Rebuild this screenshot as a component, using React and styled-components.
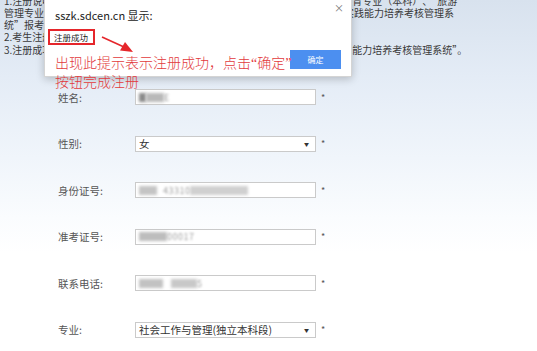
import React from 'react';
import styled, { createGlobalStyle } from 'styled-components';

const GlobalStyle = createGlobalStyle`
  html, body {
    margin: 0;
    padding: 0;
    width: 537px;
    height: 351px;
    overflow: hidden;
  }
  body {
    font-family: "Noto Sans CJK SC", "Liberation Sans", sans-serif;
    color: #333;
  }
`;

const Page = styled.div`
  position: relative;
  width: 537px;
  height: 351px;
  overflow: hidden;
  background: linear-gradient(180deg, #d8e2ee 0%, #e4ecf6 22%, #f0f5fb 45%, #fafcfe 62%, #ffffff 72%);
`;

const Notice = styled.div`
  margin-top: -5px;
  padding-left: 4px;
  font-size: 10px;
  line-height: 12px;
  color: #3a3a3a;
`;

const Para = styled.div`
  white-space: nowrap;
  margin-top: ${p => p.$gap || 0}px;
`;

const Form = styled.div`
  margin-top: 33px;
`;

const Row = styled.div`
  display: grid;
  grid-template-columns: 77px 181px auto;
  align-items: center;
  height: 16px;
  padding-left: 58px;
  margin-bottom: 30.5px;
`;

const Label = styled.span`
  font-size: 10.5px;
  color: #555;
`;

const Field = styled.div`
  box-sizing: border-box;
  height: 16px;
  border: 1px solid #cacaca;
  background: #fff;
  display: flex;
  align-items: center;
  padding: 0 6px 0 3px;
  font-size: 10.5px;
  color: #333;
`;

const Caret = styled.span`
  margin-left: auto;
  font-size: 5px;
  color: #333;
`;

const Star = styled.span`
  margin-left: 5px;
  font-size: 9px;
  color: #555;
`;

const Smudge = styled.span`
  display: inline-block;
  width: ${p => p.$w}px;
  height: 9px;
  background: ${p => p.$c || '#c4c4c4'};
  filter: blur(1.6px);
  margin-right: ${p => p.$mr || 0}px;
`;

const Faint = styled.span`
  font-size: 9px;
  color: #a0a0a0;
  filter: blur(1.1px);
  letter-spacing: 0.5px;
`;

const Alert = styled.div`
  position: absolute;
  left: 44px;
  top: -12px;
  width: 308px;
  height: 89px;
  box-sizing: border-box;
  background: #fff;
  border: 1px solid #d4d4d4;
  box-shadow: 0 2px 8px rgba(0, 0, 0, 0.22);
  padding: 19px 10px 0 10px;
`;

const Title = styled.div`
  font-size: 11px;
  line-height: 14px;
  color: #222;
`;

const Close = styled.span`
  position: absolute;
  right: 7px;
  top: 11px;
  font-size: 10px;
  color: #777;
`;

const Message = styled.div`
  display: inline-block;
  margin: 6px 0 0 -7px;
  border: 2.5px solid #e5262b;
  padding: 0 5px 0 4px;
  font-size: 8.5px;
  line-height: 12px;
  color: #222;
`;

const Footer = styled.div`
  display: flex;
  justify-content: flex-end;
  margin-top: 4px;
`;

const OkButton = styled.button`
  width: 51px;
  height: 19px;
  border: none;
  background: #4c8ff0;
  color: #fff;
  font-family: "Noto Sans CJK SC", sans-serif;
  font-size: 8px;
  padding: 0;
`;

const Hint = styled.div`
  position: absolute;
  left: 55px;
  top: 54px;
  font-family: "Liberation Serif", "Noto Sans CJK SC", serif;
  font-weight: 300;
  font-size: 14px;
  line-height: 19px;
  color: #e23a3c;
  white-space: nowrap;
`;

const Arrow = styled.svg`
  position: absolute;
  left: 100px;
  top: 34px;
`;

const fields = [
  { label: '姓名:', content: <><Smudge $w={7} $c="#8a8a8a" /><Smudge $w={18} $c="#b9b9b9" /><Faint>E</Faint></> },
  { label: '性别:', select: '女' },
  { label: '身份证号:', content: <><Smudge $w={18} $mr={6} /><Faint>43310</Faint><Smudge $w={58} $c="#d0d0d0" /></> },
  { label: '准考证号:', content: <><Smudge $w={28} $c="#bdbdbd" /><Faint>00017</Faint></> },
  { label: '联系电话:', content: <><Smudge $w={24} $c="#c2c2c2" $mr={8} /><Smudge $w={26} $c="#c8c8c8" /><Faint>5</Faint></> },
  { label: '专业:', select: '社会工作与管理(独立本科段)' },
];

export default function App() {
  return (
    <Page lang="zh-CN">
      <GlobalStyle />
      <Notice>
        <Para>1.注册说明：本系统适用于报考山东省高等教育自学考试社会工作与管理学前教育专业（本科）”、“旅游</Para>
        <Para>管理专业（本科）考生须在本网站注册，方可登录“山东省高等教育自学考试实践能力培养考核管理系</Para>
        <Para>统”报考，注册信息须真实有效。</Para>
        <Para>2.考生注册时请如实填写个人信息，带*号的为必填项。</Para>
        <Para $gap={1}>3.注册成功后，考生即可使用准考证号密码登录“山东省高等教育自学考试实践能力培养考核管理系统”。</Para>
      </Notice>

      <Form>
        {fields.map(f => (
          <Row key={f.label}>
            <Label>{f.label}</Label>
            <Field>
              {f.select ? (
                <>
                  <span>{f.select}</span>
                  <Caret>▼</Caret>
                </>
              ) : f.content}
            </Field>
            <Star>*</Star>
          </Row>
        ))}
      </Form>

      <Alert>
        <Title>sszk.sdcen.cn 显示:</Title>
        <Close>×</Close>
        <Message>注册成功</Message>
        <Footer>
          <OkButton>确定</OkButton>
        </Footer>
      </Alert>

      <Arrow width="38" height="22" viewBox="0 0 38 22">
        <line x1="2" y1="3" x2="24" y2="13" stroke="#e5262b" strokeWidth="1.6" />
        <polygon points="33,18 20,16.5 25,8" fill="#e5262b" />
      </Arrow>

      <Hint>
        出现此提示表示注册成功，点击“确定”
        <br />
        按钮完成注册
      </Hint>
    </Page>
  );
}
